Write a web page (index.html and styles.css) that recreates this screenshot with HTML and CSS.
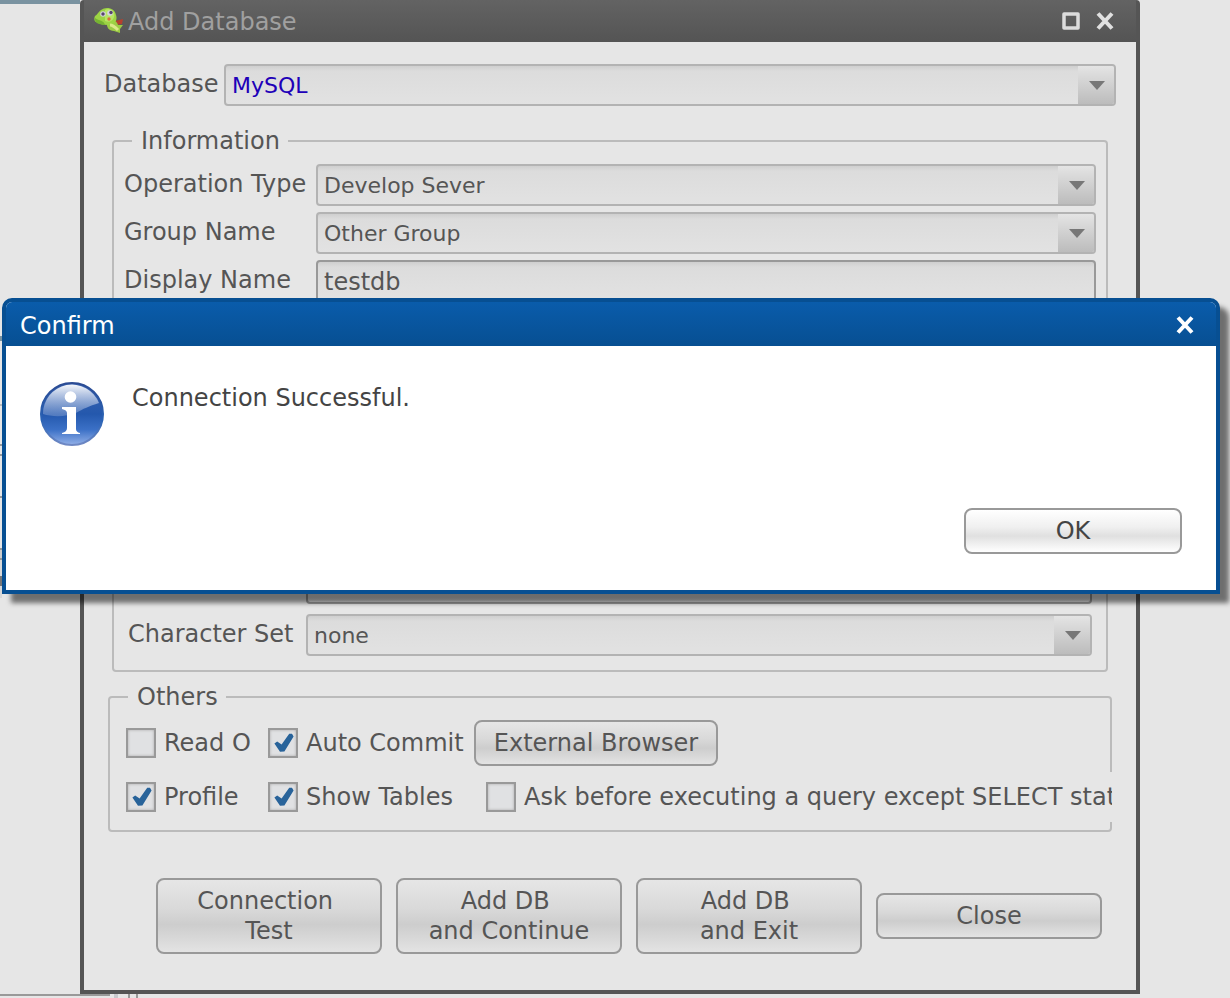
FILE: index.html
```
<!DOCTYPE html>
<html lang="en">
<head>
<meta charset="utf-8">
<title>Add Database</title>
<link rel="stylesheet" href="styles.css">
</head>
<body>
<div class="edge-top"></div>
<div class="edge-left"></div>
<main class="window">
  <header class="titlebar">
    <svg class="turtle" viewBox="0 0 30 28" aria-hidden="true">
      <path d="M21 14 L29 12 L28 17 L22 18Z" fill="#b5402e"/>
      <path d="M13 15 C18 11 23 14 24 18 L29 18 L26 22 L26 26 L20 24 C15 24 12 20 13 15Z" fill="#9ccb45"/>
      <path d="M1 9 C3 8 4 5 7 3 C12 -1 21 1 22 8 C24 14 20 18 14 18 C9 18 6 17 2 15 C0 14 0 11 1 9Z" fill="#9dd444"/>
      <path d="M11 3 C16 0 22 5 20 10 C19 14 15 16 11 14Z" fill="#b8e565"/>
      <path d="M1 11 C5 14 10 13 11 18 C6 18 0 16 1 11Z" fill="#76b332"/>
      <circle cx="9" cy="7" r="2.800" fill="#d5d3dd"/><circle cx="16" cy="6" r="2.800" fill="#d5d3dd"/>
      <circle cx="9" cy="7" r="1.700" fill="#57456e"/><circle cx="17" cy="5.500" r="1.700" fill="#57456e"/>
      <circle cx="15" cy="12" r="1.700" fill="#d8713d"/>
      <path d="M16 18 C19 18 21 20 24 23" fill="none" stroke="#dbe98a" stroke-width="3"/>
    </svg>
    <h1 class="title">Add Database</h1>
    <button class="tool" type="button" aria-label="Maximize"><svg viewBox="0 0 18 18"><path d="M2 2H16V16H2Z" fill="none" stroke="#dcdcdc" stroke-width="3.500" stroke-linejoin="round"/></svg></button>
    <button class="tool" type="button" aria-label="Close window"><svg viewBox="0 0 18 18"><path d="M2 1.500L16 16.500M16 1.500L2 16.500" stroke="#e0e0e0" stroke-width="4"/></svg></button>
  </header>
  <form class="content">
    <div class="row database">
      <label for="db">Database</label>
      <span class="picker"><select class="field blue" id="db"><option>MySQL</option></select><svg class="arrow" viewBox="0 0 36 38"><path d="M11 15H27L19 24Z"/></svg></span>
    </div>

    <fieldset class="information">
      <legend>Information</legend>
      <div class="group general">
        <div class="row">
          <label for="op">Operation Type</label>
          <span class="picker"><select class="field" id="op"><option>Develop Sever</option></select><svg class="arrow" viewBox="0 0 36 38"><path d="M11 15H27L19 24Z"/></svg></span>
        </div>
        <div class="row">
          <label for="group">Group Name</label>
          <span class="picker"><select class="field" id="group"><option>Other Group</option></select><svg class="arrow" viewBox="0 0 36 38"><path d="M11 15H27L19 24Z"/></svg></span>
        </div>
        <div class="row">
          <label for="display">Display Name</label>
          <input class="field dark" id="display" type="text" value="testdb">
        </div>
      </div>
      <div class="group connection">
        <div class="row">
          <span class="blank"></span>
          <input class="field dark" type="text">
        </div>
        <div class="row">
          <label for="charset">Character Set</label>
          <span class="picker"><select class="field" id="charset"><option>none</option></select><svg class="arrow" viewBox="0 0 36 38"><path d="M11 15H27L19 24Z"/></svg></span>
        </div>
      </div>
    </fieldset>

    <fieldset class="others">
      <legend>Others</legend>
      <div class="checks">
        <label class="check first"><input type="checkbox">Read O</label>
        <label class="check second"><input type="checkbox" checked>Auto Commit</label>
        <button class="btn browser" type="button">External Browser</button>
      </div>
      <div class="checks lower">
        <label class="check first"><input type="checkbox" checked>Profile</label>
        <label class="check second"><input type="checkbox" checked>Show Tables</label>
        <label class="check ask"><input type="checkbox"><span>Ask before executing a query except SELECT stat</span></label>
      </div>
    </fieldset>

    <div class="actions">
      <button class="btn tall" type="button">Connection 
Test</button>
      <button class="btn tall" type="button">Add DB 
and Continue</button>
      <button class="btn tall" type="button">Add DB 
and Exit</button>
      <button class="btn" type="button">Close</button>
    </div>
  </form>
</main>
<footer class="edge-bottom"><i class="line"></i><i class="pale"></i><i class="bar"></i><i class="bar"></i></footer>

<section class="confirm" role="dialog" aria-labelledby="confirm-title">
  <header class="confirm-bar">
    <h2 class="title" id="confirm-title">Confirm</h2>
    <button class="tool" type="button" aria-label="Close dialog"><svg viewBox="0 0 18 18"><path d="M2 1.500L16 16.500M16 1.500L2 16.500" stroke="#fff" stroke-width="4"/></svg></button>
  </header>
  <div class="confirm-body">
    <svg class="info" viewBox="0 0 64 64" aria-hidden="true">
      <defs>
        <linearGradient id="ball" x1="0" y1="0" x2="0" y2="1"><stop offset="0" stop-color="#3b62ae"/><stop offset=".5" stop-color="#2458ad"/><stop offset=".75" stop-color="#3b70c6"/><stop offset="1" stop-color="#92b0e8"/></linearGradient>
        <linearGradient id="shine" x1="0" y1="0" x2="0" y2="1"><stop offset="0" stop-color="#fff" stop-opacity=".95"/><stop offset="1" stop-color="#7d9bd0" stop-opacity=".5"/></linearGradient>
        <linearGradient id="rim" x1="0" y1="0" x2="0" y2="1"><stop offset="0" stop-color="#2b4b93"/><stop offset=".6" stop-color="#2a63b5"/><stop offset="1" stop-color="#7089c4"/></linearGradient>
      </defs>
      <circle cx="32" cy="32" r="31" fill="url(#ball)" stroke="url(#rim)" stroke-width="2"/>
      <path d="M3 32A29 29 0 0 1 59 21C49 24 43 27 36 31C26 35 12 35 3 32Z" fill="url(#shine)"/>
      <circle cx="30.500" cy="15" r="5.800" fill="#fff"/>
      <path d="M22 25H36V47Q36 50 40 51V52H22V51Q27 50 27 46V31Q27 28 22 27Z" fill="#fff"/>
    </svg>
    <p class="message">Connection Successful.</p>
  </div>
  <div class="confirm-actions"><button class="btn ok" type="button">OK</button></div>
</section>
</body>
</html>
```
FILE: styles.css
```
* { box-sizing: border-box; }
body {
  margin: 0;
  overflow: hidden;
  background: #e6e6e6;
  color: #555;
  font: 24px/28px "DejaVu Sans", Verdana, sans-serif;
}
.edge-top {
  position: absolute;
  inset: 0 auto auto 0;
  width: 80px;
  height: 4px;
  background: #7a93a1;
}
.edge-left {
  position: absolute;
  top: 336px;
  left: 0;
  width: 2px;
  height: 262px;
  background: linear-gradient(#7a93a1 0 5px, #e6e6e6 5px 68px, #bbb 68px 70px, #e6e6e6 70px 108px, #999 108px 110px, #e6e6e6 110px 118px, #999 118px 120px, #e6e6e6 120px 160px, #999 160px 162px, #e6e6e6 162px 212px, #999 212px 214px, #ccc 214px 222px, #999 222px 224px, #d8d8d8 224px 240px, #777 240px 250px, #d8d8d8 250px);
}
.window {
  margin: 0 90px 0 80px;
  border: solid #555;
  border-width: 0 4px 4px;
  border-radius: 4px 4px 0 0;
}
.titlebar {
  display: flex;
  align-items: center;
  gap: 16px;
  height: 42px;
  padding: 0 22px 0 10px;
  background: linear-gradient(#636363, #545454);
  color: #a0a0a0;
}
.turtle { width: 30px; height: 28px; margin-right: -12px; }
.title { flex: 1; margin: 0; padding-top: 2px; font-size: 24px; font-weight: 400; }
.tool { display: block; padding: 0; border: 0; background: none; }
.tool svg { display: block; width: 18px; height: 18px; }
.content { padding: 22px 20px 36px; }
.row { display: flex; }
.row label, .row .blank { flex: none; padding: 6px 0; white-space: nowrap; }
.database label { width: 120px; }
.picker { position: relative; display: flex; flex: 1; }
.field {
  flex: 1;
  width: 100%;
  height: 42px;
  margin: 0;
  padding: 1px 6px 0;
  border: 2px solid #b3b3b3;
  border-radius: 4px;
  background: linear-gradient(#cfcfcf, #dcdcdc 5px, #e2e2e2);
  color: #555;
  font: 22px "DejaVu Sans", Verdana, sans-serif;
  appearance: none;
}
.dark { border-color: #999; font-size: 24px; }
.blue { color: #2000b8; }
.arrow {
  position: absolute;
  top: 2px;
  right: 2px;
  width: 36px;
  height: 38px;
  border-radius: 0 2px 2px 0;
  background: linear-gradient(#e4e4e4, #bcbcbc);
  fill: #777;
  pointer-events: none;
}
fieldset {
  min-width: 0;
  border: 2px solid #bbb;
  border-radius: 4px;
}
legend { margin-left: 8px; padding: 1px 8px 0 9px; line-height: 27px; }
.information { margin: 21px 8px 0; padding: 9px 10px 14px; }
.group { display: grid; gap: 6px; }
.general label { width: 192px; }
.connection { gap: 10px; margin-top: 260px; padding: 0 4px; }
.connection label, .connection .blank { width: 178px; }
.others { margin: 11px 4px 0; padding: 9px 0 8px 16px; }
.others legend { margin-left: 2px; }
.checks { display: flex; align-items: center; height: 46px; }
.lower { height: 50px; margin: 6px -2px 0 0; background: #e6e6e6; }
.check { display: flex; align-items: center; gap: 8px; white-space: nowrap; }
.first { flex: 0 0 142px; }
.second { flex: 0 0 206px; }
.lower .second { flex-basis: 218px; }
.ask { flex: 1; min-width: 0; overflow: hidden; }
.check input {
  flex: none;
  width: 30px;
  height: 30px;
  margin: 0;
  border: 2px solid #999;
  background: #e0e1e3;
  box-shadow: inset 0 0 3px #aaa;
  appearance: none;
}
.check input:checked::before {
  content: "";
  display: block;
  width: 20px;
  height: 20px;
  margin: 3px 0 0 4px;
  background: #28639a;
  clip-path: polygon(2% 52%, 16% 42%, 38% 58%, 76% 4%, 90% 4%, 98% 18%, 52% 92%, 30% 94%);
}
.btn {
  flex: 1;
  height: 46px;
  padding: 0;
  border: 2px solid #999;
  border-radius: 8px;
  background: linear-gradient(#e6e6e6, #d9d9d9 40%, #cdcdcd 62%, #e3e3e3);
  color: #555;
  font: 24px/30px "DejaVu Sans", Verdana, sans-serif;
  white-space: pre;
}
.tall { height: 76px; }
.browser { flex: 0 0 244px; }
.actions { display: flex; align-items: center; gap: 14px; padding: 46px 14px 0 52px; }
.edge-bottom { display: flex; height: 4px; }
.edge-bottom i { width: 2px; margin-left: 6px; background: #999; }
.edge-bottom .line { width: 110px; height: 2px; margin: 0; }
.edge-bottom .pale { width: 4px; margin: 0 4px; background: #c8c8cc; }
.confirm {
  position: absolute;
  top: 298px;
  left: 2px;
  right: 10px;
  border: 4px solid #074f92;
  border-radius: 10px 10px 0 0;
  background: #fff;
  box-shadow: 9px 9px 5px rgba(0, 0, 0, .52);
  color: #444;
}
.confirm-bar {
  display: flex;
  align-items: center;
  height: 44px;
  padding: 2px 22px 0 14px;
  border-radius: 6px 6px 0 0;
  background: linear-gradient(#0a5cab, #074f92);
  color: #fff;
}
.confirm-body { display: flex; gap: 28px; padding: 36px 34px 0; }
.info { width: 64px; height: 64px; }
.message { margin: 2px 0 0; }
.confirm-actions { display: flex; justify-content: flex-end; padding: 62px 34px 36px; }
.ok {
  flex: 0 0 218px;
  background: linear-gradient(#fff, #f0f0f0 40%, #e0e0e0 62%, #fff);
  color: #444;
}
```
